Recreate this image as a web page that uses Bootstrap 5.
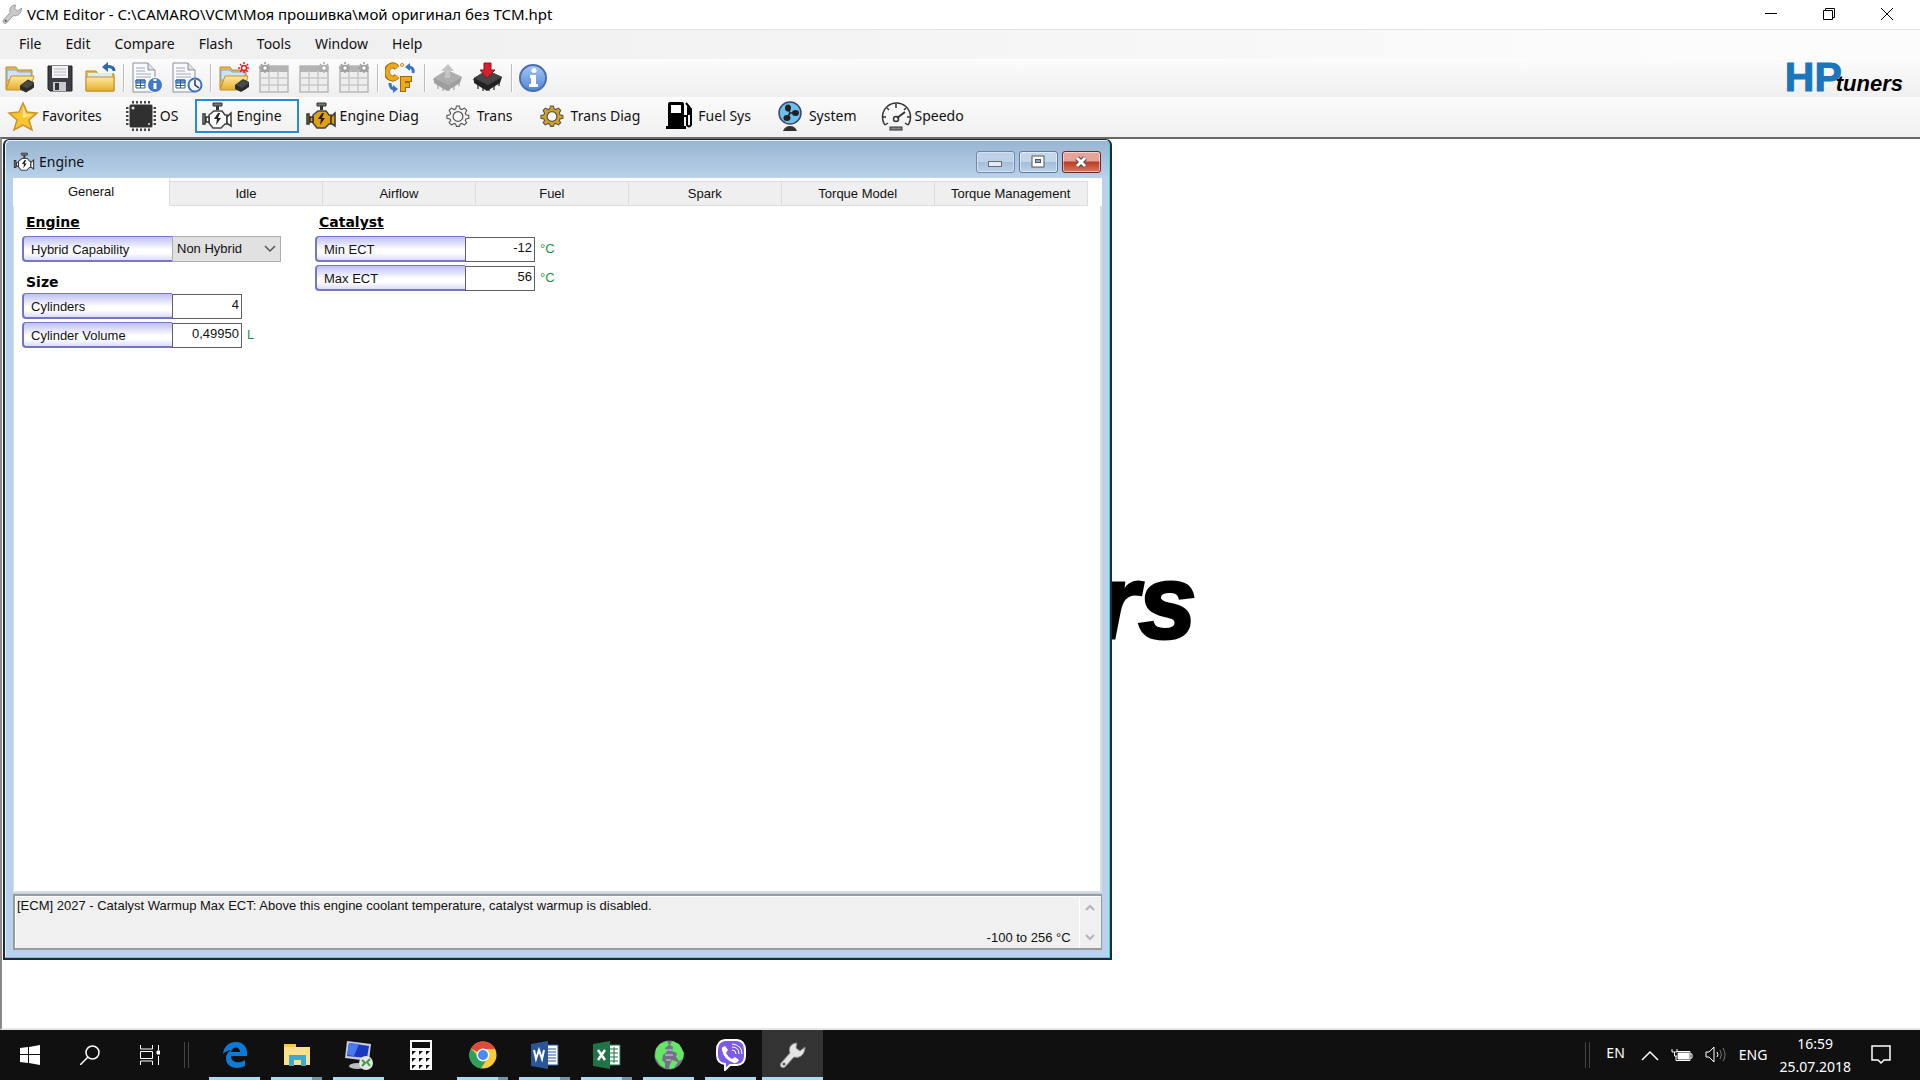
<!DOCTYPE html>
<html lang="en">
<head>
<meta charset="utf-8">
<meta name="viewport" content="width=device-width, initial-scale=1">
<title>VCM Editor</title>
<link href="https://cdn.jsdelivr.net/npm/bootstrap@5.3.0/dist/css/bootstrap.min.css" rel="stylesheet">
<script src="https://cdn.jsdelivr.net/npm/bootstrap@5.3.0/dist/js/bootstrap.bundle.min.js"></script>
<style>
body{font-family:"Noto Sans",sans-serif;font-size:14px;line-height:20px;color:#111;background:#fff;overflow:hidden}
svg{display:block;flex:none}
button{border:0;background:none;padding:0;color:inherit}
.app-title{height:29px;padding:0 4px 2px 2px;font-size:15px;color:#000}
.app-title button{width:58px;height:29px}
.menu-strip{height:30px;padding-left:7px;background:linear-gradient(90deg,#f0f0f0 20%,#fcfcfc 90%);border-top:1px solid #e4e4e4}
.menu-strip .nav-link{padding:4px 12px;color:#111}
.tool-strip{height:38px;padding:0 17px 0 4px;gap:8px;background:linear-gradient(#fcfcfc,#efefef)}
.tool-strip button{width:32px;height:32px}
.tool-sep{width:2px;height:28px;margin:0 -2px 0 -1px;border-left:1px solid #bdbdbd;background:#fff}
.hp-logo{font-family:"Liberation Sans",sans-serif;font-weight:bold;color:#1b75bc;font-size:41px;line-height:36px;padding-top:4px;-webkit-text-stroke:1px #1b75bc}
.hp-logo em{font-size:22px;color:#000;margin-left:-6px;-webkit-text-stroke:0}
.cat-strip{height:40px;background:linear-gradient(#fbfbfb,#f0f0f0);padding:2px 0 0 1px}
.cat-strip button{height:34px;padding:0 16px 0 5px;gap:3px;border:1px solid transparent;display:flex;align-items:center;white-space:nowrap}
.cat-strip .picked{border:2px solid #2a8ad4;padding:0 15px 0 4px}
.work-area{border-top:2px solid #686868;border-left:2px solid #8b8b8b;border-bottom:2px solid #e6e6e6;background:#fff;overflow:hidden}
.back-mark{position:absolute;left:1096px;top:46.2%;font:italic bold 104px/1 "Liberation Sans",sans-serif;color:#000;-webkit-text-stroke:3px #000}
.mdi{position:absolute;left:1px;top:0;width:57.8%;height:92.3%;background:linear-gradient(#99b4d1,#b9d1ea 38px);border:2px solid #1d2b33;border-top-width:1px;border-radius:6px 6px 0 0;box-shadow:inset -1px -1px #4cd0e8,inset 1px 1px #e6eff8;padding:0 8px 8px 8px;font-family:"Liberation Sans",sans-serif;font-size:13px}
.mdi-bar{height:38px;padding-top:6px;font-family:"Noto Sans",sans-serif;font-size:14px}
.mdi-bar .caps{gap:4px;padding-right:1px}
.caps button{width:39px;height:22px;border:1px solid #5e7c9f;border-radius:3px;box-shadow:inset 0 0 0 1px #ffffff80;background:linear-gradient(#c3d6ea 48%,#a2bcd8 50%,#bcd2e9);display:flex;align-items:center;justify-content:center}
.caps .faint{opacity:.8}
.caps .shut{border-color:#6a2a2a;background:linear-gradient(#e4a49b 45%,#bd3b25 50%,#d67a62)}
.tab-row{background:#fff;padding:3px 14px 0 0}
.tab-row .nav-item{flex:1 1 0}
.tab-row .nav-item:first-child{flex:0 0 157px;margin-top:-3px}
.tab-row .nav-link{width:100%;height:25px;padding:0;border:1px solid #dcdcdc;border-width:1px 1px 1px 0;border-radius:0;background:#efefef;color:#111;margin:0;line-height:24px;white-space:nowrap}
.tab-row .nav-link.active{height:28px;background:#fff;border-color:#fff #dcdcdc #fff #fff;color:#111;line-height:24px}
.page-pane{background:#fff;border:1px solid #dcdcdc;border-width:0 2px 2px 1px;padding:7px 8px;gap:34px}
.sec-head{font:bold 14px/18px "DejaVu Sans",sans-serif;margin:0 0 5px 4px;color:#000}
.sec-mid{padding-top:8px;margin-bottom:2px}
.param{display:flex;align-items:center;height:26px;margin-bottom:3px}
.param label{width:150px;height:26px;line-height:25px;padding-left:7px;border:1px solid #7676c4;border-width:1px 0 2px 2px;border-radius:4px 0 0 4px;background:linear-gradient(#c0c0f4,#fff 55%,#fff 70%,#dcdcfa)}
.param input{width:70px;height:25px;border:1px solid #606060;padding:0 2px 3px;text-align:right;background:#fff;color:#111;border-radius:0}
.param select{width:109px;height:26px;border:1px solid #adadad;padding:0 4px;background:#e1e1e1;color:#111;appearance:none;border-radius:0}
.param .pick{position:relative}
.pick svg{position:absolute;right:5px;top:9px;pointer-events:none}
.unit{color:#179a3a;margin-left:5px}
.hint{height:56px;margin-top:1px;background:#f0f0f0;border:2px solid #9b9b9b;border-right-width:1px;box-shadow:inset 1px 1px #fff}
.hint-text{padding:0 8px 0 2px}
.hint-bar{width:22px;border-left:1px solid #fff;padding:8px 0 6px}
.task-bar{height:50px;background:#101010;color:#fff}
.task-bar button{height:50px;display:flex;align-items:center;justify-content:center}
.sys{width:60px}
.pin{width:51px;margin-right:11px;border-bottom:3px solid transparent!important;padding-top:2px}
.pin.run{border-bottom:3px solid #a9dcf7!important}
.pin.many{border-image:linear-gradient(90deg,#a9dcf7 79%,#7396ab 79%) 1}
.pin.now{width:61px;margin-left:-5px;background:#333}
.grip{width:5px;height:26px;border:solid #444;border-width:0 1px}
.clock{line-height:23px}
.tray{gap:12px}
</style>
</head>
<body class="vh-100 d-flex flex-column">
<svg width="0" height="0" class="position-absolute" aria-hidden="true">
<defs>
<linearGradient id="gold" x2="0" y2="1"><stop stop-color="#fdeaa0"/><stop offset="1" stop-color="#e5ad2c"/></linearGradient>
<linearGradient id="blu" x2="0" y2="1"><stop stop-color="#a9c8f5"/><stop offset="1" stop-color="#4f84d8"/></linearGradient>
<symbol id="folder" viewBox="0 0 32 32"><path d="M2 27V5h10l2 3h14v19z" fill="#e9b94e" stroke="#b98a28"/><path d="M3 8h9l2 2h13v8H3z" fill="#cfe3f8" stroke="#86a9d2"/><path d="M2 28l5-14h23l-4 14z" fill="url(#gold)" stroke="#c39228"/></symbol>
<symbol id="minichip" viewBox="0 0 16 14"><path d="M1 7l8-6 6 3v5l-8 5-6-3z" fill="#2c2c2c"/><path d="M2 7l7-5 6 3-7 5z" fill="#484848"/></symbol>
<symbol id="doc" viewBox="0 0 32 32"><path d="M2 1h15l7 7v22H2z" fill="#f8f9fc" stroke="#8a8f99"/><path d="M17 1v7h7" fill="#dde3ec" stroke="#8a8f99"/><path d="M5 6h9M5 9h9M5 12h15M5 15h15" stroke="#a8aabb"/><path d="M5 18h9v8H5z" fill="#fff" stroke="#34639c"/><path d="M5 18h9v3H5zM9.500 18v8M5 23.500h9" stroke="#34639c" fill="#5a9ad0"/></symbol>
<symbol id="grid" viewBox="0 0 32 32"><path d="M2 4h28v26H2z" fill="#ededed" stroke="#b8b8b8" stroke-width="1.500"/><path d="M2 4h28v6H2z" fill="#b4b4b4"/><path d="M11 9v21M20 9v21M2 16h28M2 23h28" stroke="#c8c8c8" stroke-width="1.500"/></symbol>
<symbol id="burst" viewBox="0 0 12 12"><path d="M6 0v12M0 6h12M2 2l8 8M10 2l-8 8" stroke="currentColor" stroke-width="1.500" stroke-dasharray="2 1"/><circle cx="6" cy="6" r="2.500" fill="#fff" stroke="currentColor" stroke-width="1.500"/></symbol>
<symbol id="motor" viewBox="0 0 32 32"><path d="M12 3h9v3h-9z" fill="#777" stroke="#333"/><path d="M16.500 6v4" stroke="#333" stroke-width="3"/><path d="M8 15l5-4h8l3 4h2v9h-2l-4 4h-8l-4-5z" fill="currentColor" stroke="#444" stroke-width="1.500"/><path d="M2 14h2v10H2zM5 17h3v5H5zM26 17l4-4v13l-4-3z" fill="currentColor" stroke="#333" stroke-width="1.500"/><path d="M17 13l-4 6h3l-1 6 5-7h-3l2-5z" fill="#222"/></symbol>
<symbol id="cog" viewBox="0 0 32 32"><path d="M14 4h4l1 4 2 1 4-2 3 3-2 4 1 2 4 1v4l-4 1-1 2 2 3-3 3-4-2-2 1-1 3h-4l-1-3-2-1-4 2-3-3 2-3-1-2-4-1v-4l4-1 1-2-2-4 3-3 4 2 2-1z" transform="translate(1.5 0) scale(.9)" fill="currentColor" stroke="#555" stroke-width="1.500"/><circle cx="16" cy="16.500" r="6" fill="#fafafa" stroke="#555" stroke-width="1.500"/></symbol>
<symbol id="bigchip" viewBox="0 0 32 32"><path d="M1 18l5-3v8M27 17v7M22 21v7M17 23v6M6 21v6M11 24v5" stroke="#777" stroke-width="2" fill="none"/><path d="M2 16l13-8 15 7-2 6-13 8L2 21z" fill="#222"/><path d="M2 16l13-8 15 7-14 8z" fill="#454545"/></symbol>
<symbol id="spanner" viewBox="0 0 28 28"><path d="M26 6l-5 4-4-3 1-5c-6 0-9 5-7 10L2 22c-2 3 1 6 4 4l9-10c6 2 11-3 11-10z" fill="currentColor" stroke="#888"/><circle cx="5" cy="23" r="1.500" fill="#555"/></symbol>
</defs>
</svg>

<header class="app-title d-flex align-items-center">
<svg width="21" height="26" viewBox="0 0 28 28" class="me-1" color="#c9c9c9"><use href="#spanner"/></svg>
<span>VCM Editor - C:\CAMARO\VCM\Моя прошивка\мой оригинал без TCM.hpt</span>
<div class="ms-auto d-flex">
<button aria-label="Minimize"><svg width="12" height="12" class="mx-auto"><path d="M0 5.500h12" stroke="#000"/></svg></button>
<button aria-label="Restore"><svg width="12" height="12" class="mx-auto" fill="none" stroke="#000"><path d="M.5 2.500h9v9h-9zM2.500 2V.5h9v9H10"/></svg></button>
<button aria-label="Close"><svg width="12" height="12" class="mx-auto"><path d="M0 0l12 12M12 0L0 12" stroke="#000"/></svg></button>
</div>
</header>

<nav class="menu-strip nav flex-nowrap">
<a class="nav-link" href="#">File</a><a class="nav-link" href="#">Edit</a><a class="nav-link" href="#">Compare</a><a class="nav-link" href="#">Flash</a><a class="nav-link" href="#">Tools</a><a class="nav-link" href="#">Window</a><a class="nav-link" href="#">Help</a>
</nav>

<div class="tool-strip d-flex align-items-center">
<button aria-label="Open file"><svg width="32" height="32"><use href="#folder"/><use href="#minichip" x="15" y="16" width="16" height="15"/></svg></button>
<button aria-label="Save"><svg width="32" height="32"><path d="M4 4h24v25H6l-2-2z" fill="#3c3c44" stroke="#222"/><path d="M8 4h16v12H8z" fill="#f3f3f5"/><path d="M10 7h12M10 10h12M10 13h12" stroke="#b5b5bd"/><path d="M9 20h13v9H9z" fill="#c8cad2"/><path d="M11 21h4v7h-4z" fill="#333"/></svg></button>
<button aria-label="Close file"><svg width="32" height="32"><path d="M2 29V9h10l2 3h16v17z" fill="#e9b94e" stroke="#b98a28"/><path d="M4 11h24v5H4z" fill="#dbe9f8"/><path d="M2 15h28v14H2z" fill="url(#gold)" stroke="#c39228"/><path d="M30 9c0-4-4-5-8-4" stroke="#2b68b0" stroke-width="3" fill="none"/><path d="M18 5l6-5v10z" fill="#2b68b0"/></svg></button>
<span class="tool-sep"></span>
<button aria-label="File information"><svg width="32" height="32"><use href="#doc"/><circle cx="24" cy="23" r="7.500" fill="#3f78cf" stroke="#fff"/><path d="M24 21v6M24 17v2" stroke="#fff" stroke-width="3"/></svg></button>
<button aria-label="File history"><svg width="32" height="32"><use href="#doc"/><circle cx="24" cy="23" r="6.500" fill="#f1f6fd" stroke="#3e6fc0" stroke-width="2"/><path d="M24 18v5l4 3" stroke="#335" fill="none" stroke-width="1.500"/></svg></button>
<span class="tool-sep"></span>
<button aria-label="Open compare file"><svg width="32" height="32" color="#e8202a"><use href="#folder"/><use href="#minichip" x="16" y="16" width="16" height="14"/><use href="#burst" x="20" y="0" width="12" height="12"/></svg></button>
<button aria-label="Compare first" disabled><svg width="32" height="32" color="#999"><use href="#grid"/><use href="#burst" x="1" y="0" width="12" height="12"/></svg></button>
<button aria-label="Compare second" disabled><svg width="32" height="32" color="#aaa"><use href="#grid"/><use href="#burst" x="20" y="0" width="12" height="12"/></svg></button>
<button aria-label="Compare both" disabled><svg width="32" height="32" color="#999"><use href="#grid"/><use href="#burst" x="1" y="0" width="12" height="12"/><use href="#burst" x="20" y="0" width="12" height="12"/></svg></button>
<span class="tool-sep"></span>
<button aria-label="Switch units"><svg width="32" height="32" fill="none"><path d="M12 6C8 1 2 4 2 10s6 9 10 4" stroke="#9b6a10" stroke-width="6"/><path d="M12 6C8 1 2 4 2 10s6 9 10 4" stroke="#f0a818" stroke-width="4" transform="translate(.5)"/><path d="M18 30V17h9M18 23h7" stroke="#9b6a10" stroke-width="6"/><path d="M18 29V17h8M18 23h6" stroke="#f0a818" stroke-width="4"/><path d="M28 11c1-4-1-6-5-6M5 21c0 4 1 6 5 6" stroke="#3a72c4" stroke-width="3"/><path d="M20 5l5-4v8zM13 27l-5-4v8z" fill="#3a72c4"/><circle cx="17" cy="3" r="1.500" stroke="#d47a10"/></svg></button>
<span class="tool-sep"></span>
<button aria-label="Read vehicle" disabled><svg width="32" height="32"><use href="#bigchip" opacity=".4"/><path d="M16 2l6 7h-4v7h-5V9H9z" fill="#c4c4c4"/></svg></button>
<button aria-label="Write vehicle"><svg width="32" height="32"><use href="#bigchip"/><path d="M12 1h7v7h4l-8 8-7-8h4z" fill="#d6202c" stroke="#9c1018"/></svg></button>
<span class="tool-sep"></span>
<button aria-label="About"><svg width="30" height="30"><circle cx="14" cy="15" r="13" fill="url(#blu)" stroke="#4a6fb0" stroke-width="2"/><path d="M11 12h6v9h2v3h-9v-3h2v-6h-1z" fill="#fff"/><circle cx="15" cy="7.500" r="2.500" fill="#fff"/></svg></button>
<div class="hp-logo ms-auto">HP<em>tuners</em></div>
</div>

<div class="cat-strip d-flex">
<button><svg width="32" height="32"><path d="M16 3l4 9 10 1-8 7 3 10-9-5-9 5 3-10-8-7 10-1z" fill="#fbc531" stroke="#c9922a" stroke-width="1.500"/><path d="M16 6l3 8 7 1-10 3z" fill="#fde58c"/></svg>Favorites</button>
<button><svg width="32" height="32"><path d="M8 1v30M12 1v30M16 1v30M20 1v30M24 1v30M1 8h30M1 12h30M1 16h30M1 20h30M1 24h30" stroke="#444" stroke-width="2"/><rect x="4" y="4" width="24" height="24" rx="2" fill="#303030" stroke="#fafafa"/><circle cx="8" cy="8" r="1.500" fill="#ddd"/><circle cx="24" cy="24" r="1" fill="#ddd"/></svg>OS</button>
<button class="picked"><svg width="32" height="32" color="#fff"><use href="#motor"/></svg>Engine</button>
<button><svg width="32" height="32" color="#e0a010"><use href="#motor"/></svg>Engine Diag</button>
<button><svg width="32" height="32" color="#f4f4f4"><use href="#cog" x="3" y="3" width="26" height="26"/></svg>Trans</button>
<button><svg width="32" height="32" color="#d5a021"><use href="#cog" x="3" y="3" width="26" height="26"/></svg>Trans Diag</button>
<button><svg width="32" height="32"><path d="M5 29V4q0-2 2-2h12q2 0 2 2v25zM3 26h20v3H3z"/><rect x="8" y="5" width="10" height="8" fill="#fff"/><path d="M21 16h3v9q2 3 4 0V9l-5-6" stroke="#000" stroke-width="2" fill="none"/><path d="M24 6l4 3v6h-4z"/></svg>Fuel Sys</button>
<button><svg width="32" height="32"><circle cx="16" cy="13" r="11" fill="#6cc0ee" stroke="#446" stroke-width="1.500"/><ellipse cx="14" cy="8" rx="3" ry="3.500" fill="#222"/><ellipse cx="21.500" cy="13" rx="3.500" ry="3" fill="#222"/><ellipse cx="13" cy="18" rx="3.500" ry="3" fill="#222"/><path d="M14 8l2 5 5 0M16 13l-3 5" stroke="#222" stroke-width="1.500" fill="none"/><path d="M9 31q2-5 7-5t7 5z" fill="#333"/></svg>System</button>
<button><svg width="32" height="32" fill="none" stroke="#333"><path d="M5 25A14 14 0 1 1 28 25" stroke-width="1.500"/><path d="M16 4v4M7 8l2 2M26 8l-2 2M2 17h4M27 17h4M5 25l3-2M28 25l-3-2" stroke-width="1.500"/><path d="M17 18l8-6" stroke-width="2"/><circle cx="16" cy="19" r="2.500" stroke-width="1.500"/><rect x="10" y="27" width="12" height="3" fill="#888"/></svg>Speedo</button>
</div>

<main class="work-area flex-grow-1 position-relative">
<div class="back-mark">rs</div>
<section class="mdi d-flex flex-column">
<div class="mdi-bar d-flex align-items-center">
<svg width="22" height="22" color="#fff" class="me-1"><use href="#motor"/></svg><span>Engine</span>
<div class="caps d-flex ms-auto">
<button class="faint" aria-label="Minimize window"><svg width="14" height="14"><rect x=".5" y="6.500" width="13" height="5" fill="#f4f4f4" stroke="#555"/></svg></button>
<button aria-label="Maximize window"><svg width="14" height="14"><rect x="1" y="1" width="12" height="11" fill="#fff" stroke="#555"/><rect x="4.500" y="4.500" width="5" height="3" fill="#8fa9c8" stroke="#555"/></svg></button>
<button class="shut" aria-label="Close window"><svg width="14" height="12"><path d="M3 2l8 8M11 2l-8 8" stroke="#544" stroke-width="5"/><path d="M3 2l8 8M11 2l-8 8" stroke="#fff" stroke-width="3"/></svg></button>
</div>
</div>
<ul class="tab-row nav nav-tabs border-0 flex-nowrap" role="tablist">
<li class="nav-item"><button class="nav-link active" role="tab">General</button></li>
<li class="nav-item"><button class="nav-link" role="tab">Idle</button></li>
<li class="nav-item"><button class="nav-link" role="tab">Airflow</button></li>
<li class="nav-item"><button class="nav-link" role="tab">Fuel</button></li>
<li class="nav-item"><button class="nav-link" role="tab">Spark</button></li>
<li class="nav-item"><button class="nav-link" role="tab">Torque Model</button></li>
<li class="nav-item"><button class="nav-link" role="tab">Torque Management</button></li>
</ul>
<div class="page-pane flex-grow-1 d-flex align-items-start">
<div>
<h2 class="sec-head text-decoration-underline">Engine</h2>
<div class="param"><label for="hybrid">Hybrid Capability</label><span class="pick"><select id="hybrid"><option>Non Hybrid</option></select><svg width="12" height="8" fill="none" stroke="#555" stroke-width="1.500"><path d="M1 1l5 5 5-5"/></svg></span></div>
<h2 class="sec-head sec-mid">Size</h2>
<div class="param"><label for="cyl">Cylinders</label><input id="cyl" value="4"></div>
<div class="param"><label for="vol">Cylinder Volume</label><input id="vol" value="0,49950"><span class="unit">L</span></div>
</div>
<div>
<h2 class="sec-head text-decoration-underline">Catalyst</h2>
<div class="param"><label for="minect">Min ECT</label><input id="minect" value="-12"><span class="unit">°C</span></div>
<div class="param"><label for="maxect">Max ECT</label><input id="maxect" value="56"><span class="unit">°C</span></div>
</div>
</div>
<div class="hint d-flex">
<div class="hint-text flex-grow-1 d-flex flex-column justify-content-between"><span>[ECM] 2027 - Catalyst Warmup Max ECT: Above this engine coolant temperature, catalyst warmup is disabled.</span><span class="text-end">-100 to 256 °C</span></div>
<div class="hint-bar d-flex flex-column align-items-center justify-content-between"><svg width="10" height="8" fill="none" stroke="#b5b5b5" stroke-width="2"><path d="M1 6l4-4 4 4"/></svg><svg width="10" height="8" fill="none" stroke="#b5b5b5" stroke-width="2"><path d="M1 1l4 4 4-4"/></svg></div>
</div>
</section>
</main>

<footer class="task-bar d-flex align-items-center">
<button class="sys" aria-label="Start"><svg width="20" height="20" fill="#fff"><path d="M0 3l8-1v7H0zM9 2l11-2v9H9zM0 10h8v8l-8-1zM9 10h11v10L9 18z"/></svg></button>
<button class="sys" aria-label="Search"><svg width="20" height="20" fill="none" stroke="#fff" stroke-width="1.500"><circle cx="12.500" cy="7.500" r="6.500"/><path d="M8 12l-8 8"/></svg></button>
<button class="sys" aria-label="Task view"><svg width="20" height="20" fill="none" stroke="#fff"><path d="M.5 0v4h12V0M.5 20v-4h12v4M.5 6.500h12v7H.5zM18.500 0v5M18.500 11v9" /><path d="M17 6h3v3h-3z" fill="#fff"/></svg></button>
<span class="grip ms-1 me-3"></span>
<button class="pin run ms-1" aria-label="Edge"><svg width="26" height="28"><path d="M1 13C2 5 7 1 14 1c8 0 12 6 11 14H9c0 7 9 8 14 4v6c-8 4-19 2-19-8 0-4 3-7 6-8-4 0-7 2-9 4zm8-2h9c0-6-8-6-9 0z" fill="#0b7bd7" fill-rule="evenodd"/></svg></button>
<button class="pin run many" aria-label="File Explorer"><svg width="28" height="26"><path d="M1 2h12v3h14v18H1z" fill="#f6c945"/><path d="M1 5h26v18H1z" fill="#fde08a"/><path d="M6 24V13h17v11h-5v-6h-7v6z" fill="#3ea7d8"/></svg></button>
<button class="pin run" aria-label="Remote Desktop"><svg width="30" height="30"><path d="M3 1l24 3-2 17-24-3z" fill="#c9ccd6"/><path d="M5 3l20 3-2 12L3 16z" fill="#1838c0"/><path d="M5 3l10 1-5 12-7-1z" fill="#4a78ee"/><ellipse cx="13" cy="26" rx="8" ry="3" fill="#bbb"/><circle cx="22" cy="23" r="7" fill="#e6e6e6"/><path d="M18 20l3 3-3 3M26 19l-3 3 3 4" stroke="#37a23a" stroke-width="2" fill="none"/></svg></button>
<button class="pin" aria-label="Calculator"><svg width="22" height="30"><path d="M0 0h22v30H0z" fill="#fff"/><path d="M2 2h18v6H2zM2 11h4l-4 4zM9 11h4l-4 4zM16 11h4l-4 4zM2 18h4l-4 4zM9 18h4l-4 4zM16 18h4l-4 4zM2 25h4l-4 4zM9 25h4l-4 4zM16 25h4l-4 4z" fill="#111"/></svg></button>
<button class="pin run many" aria-label="Chrome"><svg width="28" height="28"><circle cx="14" cy="14" r="13.500" fill="#fccb3c"/><path d="M14 14L2 7.500A13.500 13.500 0 0 1 26 8H14z" fill="#de4b3c"/><path d="M2 7.500A13.500 13.500 0 0 0 12 27.500L18 18l-6 0z" fill="#2da05a"/><circle cx="14" cy="14" r="6.500" fill="#fff"/><circle cx="14" cy="14" r="5" fill="#4a8af4"/></svg></button>
<button class="pin run many" aria-label="Word"><svg width="28" height="28"><path d="M14 4h13v20H14z" fill="#fff" stroke="#2a5699"/><path d="M17 8h8M17 11h8M17 14h8M17 17h8M17 20h8" stroke="#2a5699"/><path d="M0 3l17-3v28L0 25z" fill="#2a5699"/><path d="M3 9l2 9 3-9 3 9 2-9" stroke="#fff" stroke-width="2" fill="none"/></svg></button>
<button class="pin run many" aria-label="Excel"><svg width="28" height="28"><path d="M14 4h13v20H14z" fill="#fff" stroke="#207346"/><path d="M17 8h8M17 12h8M17 16h8M17 20h8M21 6v16" stroke="#207346"/><path d="M0 3l17-3v28L0 25z" fill="#207346"/><path d="M5 9l7 10M12 9L5 19" stroke="#fff" stroke-width="2.500" fill="none"/></svg></button>
<button class="pin run" aria-label="Globe"><svg width="30" height="30"><circle cx="15" cy="15" r="14.500" fill="#77708a"/><path d="M2 9l4-5 7-3 2 4-4 3 2 4-4 3-1 5 3 3 0 5-5-3-5-8zM18 1l7 3 5 9-1 6-4 2-3-4 1-4-5-2 1-4-3-2zM18 20l6 2-4 6-5 1 1-5z" fill="#62e862"/><path d="M12 10h6M11 15h8M12 20h5" stroke="#a89fc0" stroke-width="2"/></svg></button>
<button class="pin run" aria-label="Viber"><svg width="30" height="32"><path d="M9 1h12q8 1 8 10v6q0 8-8 9h-7l-5 5v-6q-8-1-8-9v-5Q1 2 9 1z" fill="#7d5be6" stroke="#fff" stroke-width="2"/><path d="M9 7l3 4-2 3q2 4 6 6l3-2 4 3q-2 4-5 3-10-3-12-13-1-3 3-4z" fill="#fff"/><path d="M16 11q4 0 4 4M16 8q7 0 7 7M16 5q10 1 10 10" stroke="#fff" fill="none"/></svg></button>
<button class="pin run now" aria-label="VCM Editor"><svg width="28" height="28" color="#e4e4e4"><use href="#spanner"/></svg></button>
<div class="tray ms-auto d-flex align-items-center">
<span class="grip"></span>
<span class="ms-1 me-1 pb-1">EN</span>
<svg width="18" height="11" fill="none" stroke="#fff" stroke-width="1.500"><path d="M1 10l8-8 8 8"/></svg>
<svg width="22" height="14" fill="none" stroke="#fff"><path d="M6 3.500h13v9H5V8M19 6h2v4h-2M1 1v3h5V1M3.500 4v4H6"/><path d="M7 5h11v6H7z" fill="#fff"/></svg>
<svg width="22" height="18" fill="none" stroke="#fff"><path d="M1 6h3l5-5v15l-5-5H1zM12 6q2 3 0 5"/><path d="M15 4q3 5 0 9M18 2q4 7 0 13" stroke="#777"/></svg>
<span>ENG</span>
<div class="clock text-center">16:59<br>25.07.2018</div>
<svg width="20" height="20" class="ms-2 me-2" fill="none" stroke="#fff" stroke-width="1.500"><path d="M1 1h18v14h-6l-3 3-3-3H1z"/></svg>
<span class="grip border-end-0 h-100 ms-1"></span>
</div>
</footer>
</body>
</html>
